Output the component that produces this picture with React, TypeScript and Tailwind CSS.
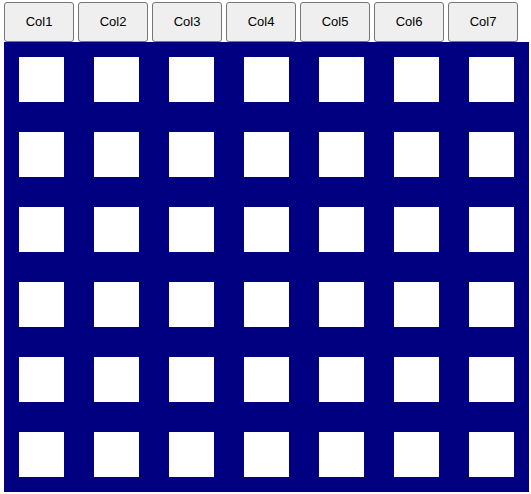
const cols = ['Col1', 'Col2', 'Col3', 'Col4', 'Col5', 'Col6', 'Col7'];
const rows = [0, 1, 2, 3, 4, 5];

export default function App() {
  return (
    <div className="pl-1 pt-[2px] font-['Liberation_Sans',Arial,sans-serif]">
      <div className="flex gap-1">
        {cols.map((c) => (
          <button
            key={c}
            className="w-[70px] h-[40px] bg-[#efefef] border border-[#767676] rounded-[3px] text-[13px] text-black"
          >
            {c}
          </button>
        ))}
      </div>
      <div className="grid grid-cols-[repeat(7,75px)] w-[525px] bg-[#000080]">
        {rows.map((r) =>
          cols.map((c) => (
            <div key={`${r}-${c}`} className="p-[15px]">
              <div className="w-[45px] h-[45px] bg-white" />
            </div>
          ))
        )}
      </div>
    </div>
  );
}
